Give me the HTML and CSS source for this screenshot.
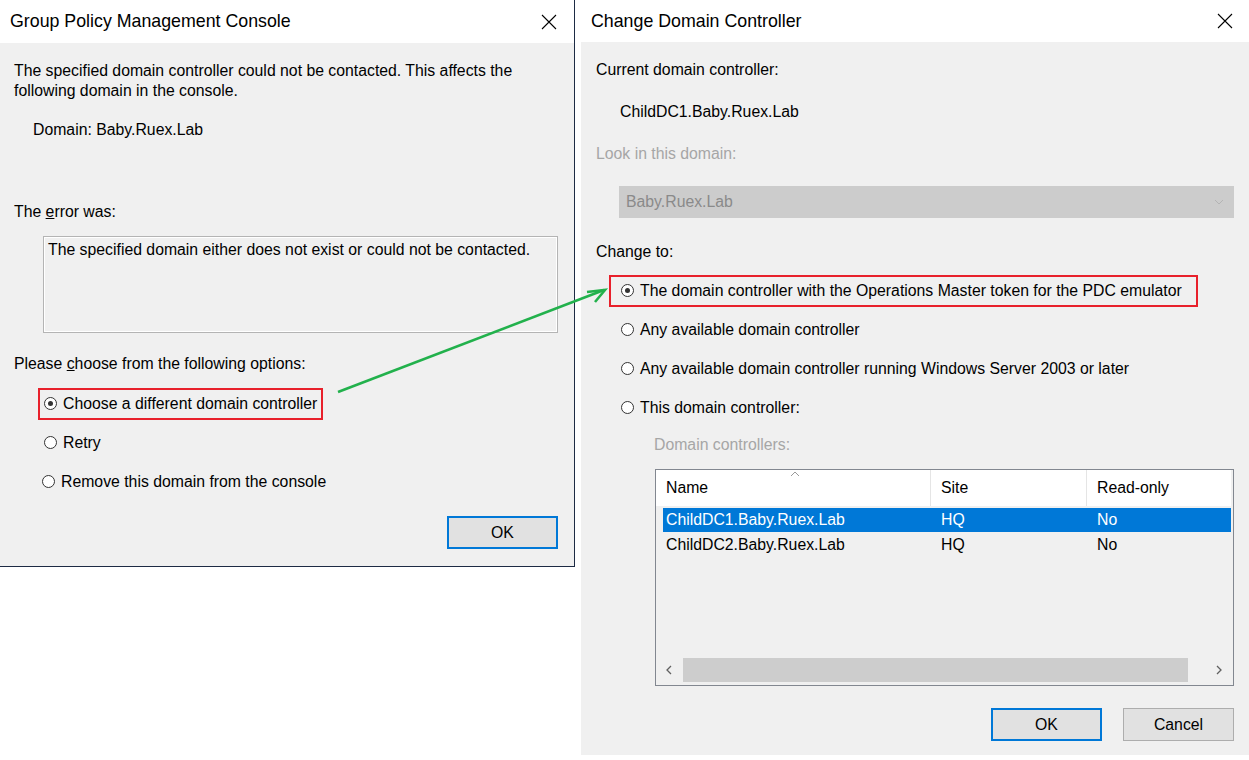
FILE: index.html
```html
<!DOCTYPE html>
<html lang="en">
<head>
    <meta charset="UTF-8">
    <title>Change Domain Controller</title>
    <link rel="stylesheet" href="styles.css">
</head>
<body>
    <div class="desktop">
        <!-- error dialog -->
        <div class="dialog gpmc">
            <div class="titlebar">
                <span>Group Policy Management Console</span>
                <svg class="close" width="16" height="16" viewBox="0 0 16 16"><path d="M1 1L15 15M15 1L1 15" stroke="#000" stroke-width="1.1" fill="none"/></svg>
            </div>
            <div class="body">
                <p class="msg">The specified domain controller could not be contacted. This affects the following domain in the console.</p>
                <p class="domain">Domain: Baby.Ruex.Lab</p>
                <p class="label error-label">The <u>e</u>rror was:</p>
                <div class="errbox">The specified domain either does not exist or could not be contacted.</div>
                <p class="label choose-label">Please <u>c</u>hoose from the following options:</p>
                <div class="options">
                    <div class="opt"><span class="hl"><span class="radio on"></span>Choose a different domain controller</span></div>
                    <div class="opt"><span class="plain"><span class="radio"></span>Retry</span></div>
                    <div class="opt"><span class="plain shift"><span class="radio"></span>Remove this domain from the console</span></div>
                </div>
                <div class="buttons">
                    <button class="btn default">OK</button>
                </div>
            </div>
        </div>

        <!-- change dc dialog -->
        <div class="dialog cdc">
            <div class="titlebar">
                <span>Change Domain Controller</span>
                <svg class="close" width="16" height="16" viewBox="0 0 16 16"><path d="M1 1L15 15M15 1L1 15" stroke="#000" stroke-width="1.1" fill="none"/></svg>
            </div>
            <div class="body">
                <p class="label first">Current domain controller:</p>
                <p class="current">ChildDC1.Baby.Ruex.Lab</p>
                <p class="label disabled look">Look in this domain:</p>
                <div class="combo">
                    <span>Baby.Ruex.Lab</span>
                    <svg width="10" height="6" viewBox="0 0 10 6"><path d="M1 1L5 5L9 1" stroke="#b4b4b4" fill="none"/></svg>
                </div>
                <p class="label change">Change to:</p>
                <div class="options">
                    <div class="opt"><span class="hl"><span class="radio on"></span>The domain controller with the Operations Master token for the PDC emulator</span></div>
                    <div class="opt"><span class="plain"><span class="radio"></span>Any available domain controller</span></div>
                    <div class="opt"><span class="plain"><span class="radio"></span>Any available domain controller running Windows Server 2003 or later</span></div>
                    <div class="opt"><span class="plain"><span class="radio"></span>This domain controller:</span></div>
                </div>
                <p class="label disabled dcs">Domain controllers:</p>
                <div class="list">
                    <div class="list-head">
                        <div class="col c-name">Name
                            <svg class="sort" width="10" height="6" viewBox="0 0 10 6"><path d="M1 5L5 1L9 5" stroke="#9a9a9a" fill="none"/></svg>
                        </div>
                        <div class="col c-site">Site</div>
                        <div class="col c-ro">Read-only</div>
                    </div>
                    <div class="rows">
                        <div class="row selected"><span class="c-name">ChildDC1.Baby.Ruex.Lab</span><span class="c-site">HQ</span><span class="c-ro">No</span></div>
                        <div class="row"><span class="c-name">ChildDC2.Baby.Ruex.Lab</span><span class="c-site">HQ</span><span class="c-ro">No</span></div>
                    </div>
                    <div class="hscroll">
                        <svg width="8" height="10" viewBox="0 0 8 10"><path d="M6 1L2 5L6 9" stroke="#606060" stroke-width="1.3" fill="none"/></svg>
                        <div class="thumb"></div>
                        <svg width="8" height="10" viewBox="0 0 8 10"><path d="M2 1L6 5L2 9" stroke="#606060" stroke-width="1.3" fill="none"/></svg>
                    </div>
                </div>
                <div class="buttons">
                    <button class="btn default">OK</button>
                    <button class="btn">Cancel</button>
                </div>
            </div>
        </div>

        <!-- annotation arrow -->
        <svg class="arrow" width="1249" height="760" viewBox="0 0 1249 760">
            <path d="M338 392L604 290" stroke="#22b14c" stroke-width="2.6" fill="none"/>
            <path d="M587 292L605 290L595 302" stroke="#22b14c" stroke-width="2.6" fill="none"/>
        </svg>
    </div>
</body>
</html>
```

FILE: styles.css
```css
body {
    margin: 0;
    background: #fff;
    font-family: "Liberation Sans", Arial, sans-serif;
    font-size: 15.8px;
    color: #000;
}
p {
    margin: 0;
    line-height: 20px;
}
.desktop {
    position: relative;
    display: flex;
    align-items: flex-start;
    width: 1249px;
    height: 760px;
}
.dialog {
    display: flex;
    flex-direction: column;
}
.titlebar {
    display: flex;
    justify-content: space-between;
    align-items: center;
    background: #fff;
    padding-left: 10px;
    font-size: 17.8px;
}
.body {
    background: #f0f0f0;
    flex: 1;
}

/* left dialog */
.gpmc {
    width: 574px;
    height: 566px;
    border-right: 1px solid #1d2b44;
    border-bottom: 1px solid #1d2b44;
}
.gpmc .titlebar {
    height: 43px;
    padding-right: 17px;
}
.gpmc .body {
    padding: 18px 16px 0 14px;
}
.domain {
    margin: 19px 0 0 19px;
}
.error-label {
    margin-top: 62px;
}
.errbox {
    margin: 14px 0 0 29px;
    height: 87px;
    padding: 4px 4px;
    border: 1px solid #b4b4b4;
    box-shadow: inset 1px 1px 0 #fff, inset -1px -1px 0 #fff;
}
.choose-label {
    margin-top: 21px;
}
.gpmc .options {
    margin: 10px 0 0 24px;
}
.gpmc .buttons {
    margin-top: 15px;
}

/* options */
.opt {
    height: 39px;
    display: flex;
    align-items: center;
}
.hl, .plain {
    display: inline-flex;
    align-items: center;
    height: 28px;
    padding: 0 4px 0 4px;
    border: 2px solid transparent;
}
.hl {
    border-color: #e8202b;
}
.shift {
    margin-left: -2px;
}
.radio {
    width: 11px;
    height: 11px;
    border: 1px solid #333;
    border-radius: 50%;
    background: #fff;
    margin-right: 6px;
    display: inline-flex;
    align-items: center;
    justify-content: center;
}
.radio.on::after {
    content: "";
    width: 5px;
    height: 5px;
    border-radius: 50%;
    background: #333;
}

/* buttons */
.buttons {
    display: flex;
    justify-content: flex-end;
    gap: 21px;
}
.btn {
    width: 111px;
    height: 33px;
    background: #e1e1e1;
    border: 1px solid #adadad;
    font-family: inherit;
    font-size: 15.8px;
    color: #000;
    padding: 0;
}
.btn.default {
    border: 2px solid #0078d7;
}

/* right dialog */
.cdc {
    margin-left: 6px;
    width: 668px;
    height: 755px;
}
.cdc .titlebar {
    height: 42px;
    padding-right: 16px;
}
.cdc .body {
    padding: 18px 15px 0 15px;
}
.disabled {
    color: #a6a6a6;
}
.current {
    margin: 22px 0 0 24px;
}
.look {
    margin-top: 22px;
}
.combo {
    margin: 22px 0 0 23px;
    height: 32px;
    background: #cccccc;
    display: flex;
    align-items: center;
    justify-content: space-between;
    padding: 0 10px 0 7px;
    color: #8a8a8a;
}
.change {
    margin-top: 24px;
}
.cdc .options {
    margin: 9px 0 0 13px;
}
.cdc .hl, .cdc .plain {
    padding-left: 10px;
    padding-right: 14px;
}
.dcs {
    margin-top: 8px;
    margin-left: 58px;
}
.list {
    margin: 14px 0 0 59px;
    height: 215px;
    border: 1px solid #828790;
    display: flex;
    flex-direction: column;
}
.list-head {
    display: flex;
    height: 36px;
    background: #fff;
    margin-right: 2px;
}
.col {
    display: flex;
    align-items: center;
    padding-left: 10px;
    border-right: 1px solid #e5e5e5;
}
.list-head .c-name {
    width: 264px;
    position: relative;
}
.list-head .c-site {
    width: 145px;
}
.list-head .c-ro {
    flex: 1;
    border-right: none;
}
.sort {
    position: absolute;
    left: 134px;
    top: 1px;
}
.rows {
    flex: 1;
    padding: 2px 2px 0 7px;
}
.row {
    display: flex;
    align-items: center;
    height: 24px;
    padding-left: 3px;
    margin-bottom: 1px;
}
.row.selected {
    background: #0078d7;
    color: #fff;
}
.row .c-name {
    width: 275px;
}
.row .c-site {
    width: 156px;
}
.hscroll {
    height: 26px;
    display: flex;
    align-items: center;
    padding: 0 10px 0 9px;
    margin-bottom: 2px;
}
.thumb {
    flex: 1;
    height: 24px;
    background: #cdcdcd;
    margin: 0 27px 0 10px;
}
.cdc .buttons {
    margin-top: 22px;
}

/* annotation */
.arrow {
    position: absolute;
    left: 0;
    top: 0;
    pointer-events: none;
}
```
